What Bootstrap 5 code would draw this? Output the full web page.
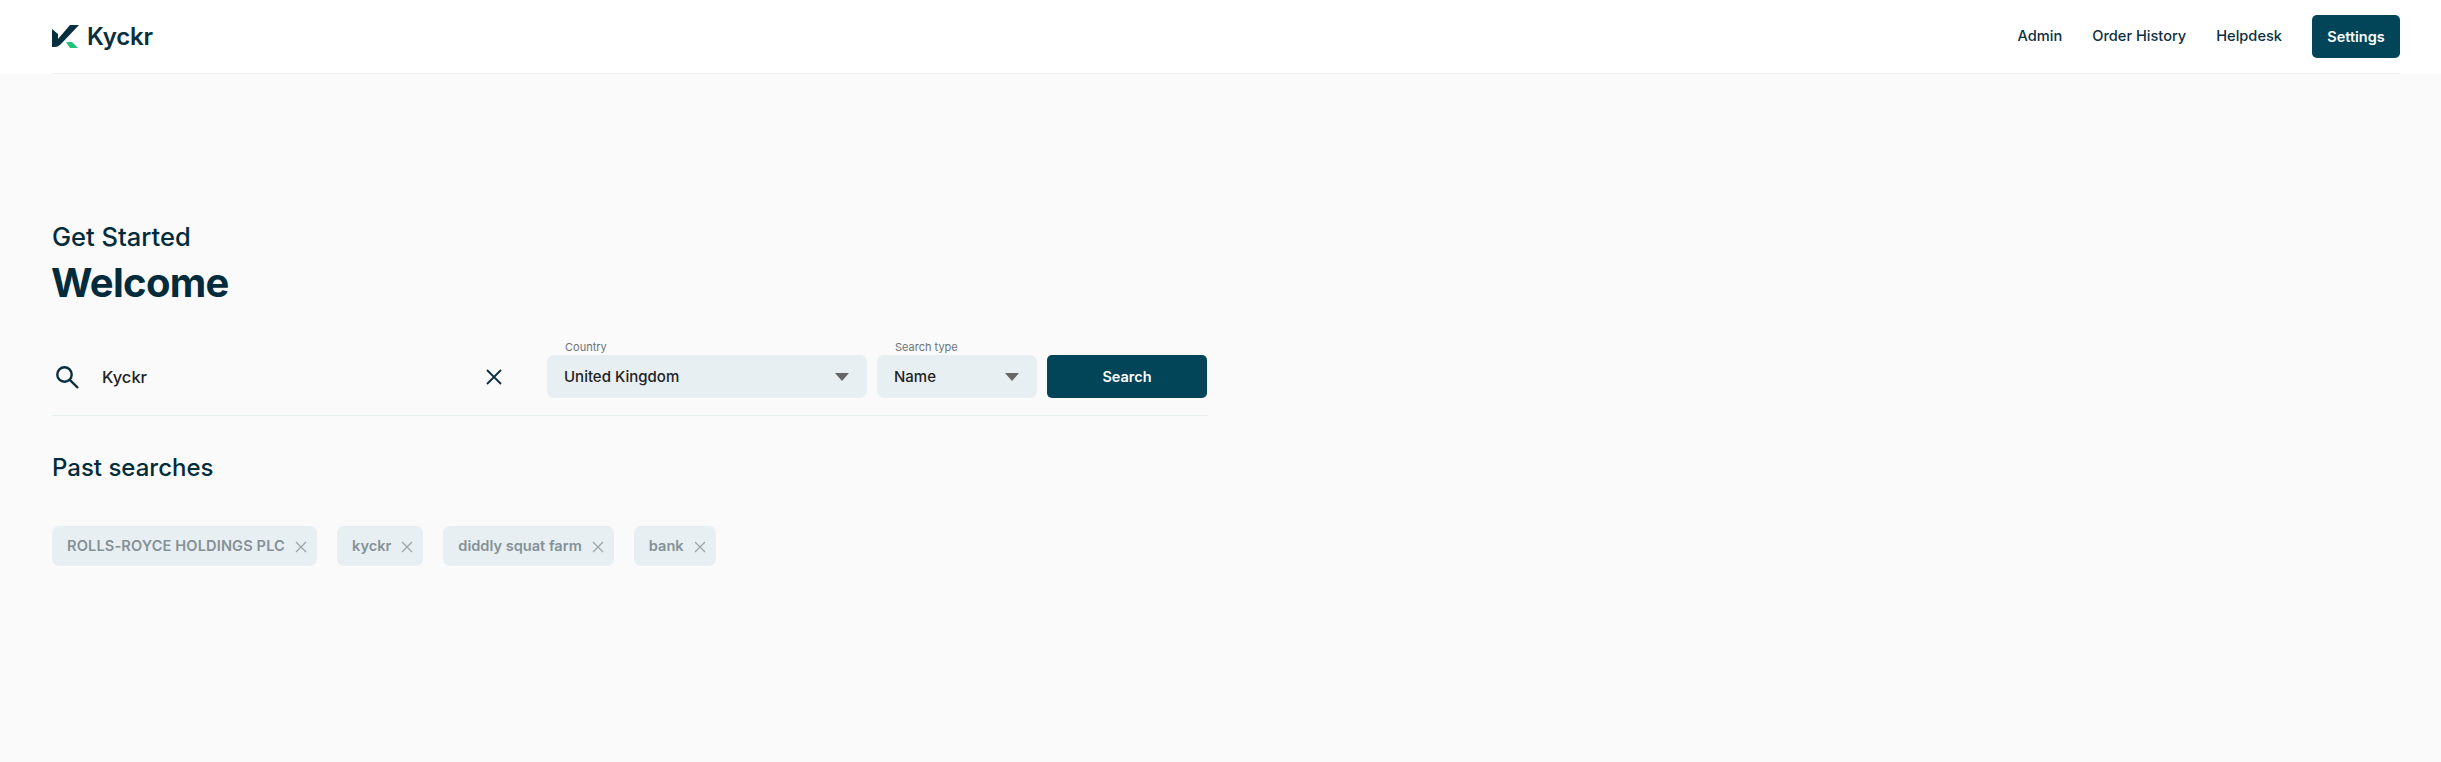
<!DOCTYPE html>
<html lang="en"><head><meta charset="utf-8"><title>Kyckr</title>
<link href="https://cdn.jsdelivr.net/npm/bootstrap@5.3.0/dist/css/bootstrap.min.css" rel="stylesheet">
<style>
html,body{height:100%}
body{background:#fafafa;font-family:Inter,"Noto Sans",sans-serif;color:#022c3c;min-height:762px}
.topbar{background:#fff;padding:0 41px 0 52px;height:74px}
.topbar-in{height:74px;border-bottom:1px solid #efefef}
.brand{font-size:24px;font-weight:600;color:#0a2f3d;letter-spacing:-.2px;gap:8px;text-decoration:none}
.top-link{font-size:14.6px;font-weight:500;color:#0b2f3f;text-decoration:none}
.top-links{gap:30px}
.btn-k{background:#024458;color:#fff;font-weight:600;font-size:14.5px;border:0;border-radius:5px}
.btn-k:hover{background:#024458;color:#fff}
.btn-settings{width:88px;height:43px}
main{padding:148px 0 0 52px;width:1208px}
.eyebrow{font-size:25.5px;line-height:30px;font-weight:500;margin:0 0 6px;color:#022c3c}
.welcome{font-size:40px;line-height:50px;font-weight:700;margin:0 0 0 -1px;letter-spacing:-.7px;color:#022c3c}
.searchrow{margin-top:34px;height:74px;border-bottom:1px solid #e6eef0;gap:10px;padding-bottom:17px}
.q{width:485px;height:43px;padding-left:3px}
.q input{border:0;background:transparent;box-shadow:none!important;font-size:16.5px;font-weight:500;color:#222;padding:1px 0 0;height:43px;margin-left:23px;width:370px}
.q .clear{margin-right:35px}
.field{position:relative}
.field label{position:absolute;left:18px;top:-15px;font-size:11px;line-height:14px;color:#6b7478}
.form-select.k{background-color:#e8eff2;border:0;border-radius:7px;height:43px;font-size:15px;font-weight:500;color:#222;padding:2px 17px 0;background-image:url("data:image/svg+xml,%3Csvg xmlns='http://www.w3.org/2000/svg' viewBox='0 0 14 8'%3E%3Cpath fill='%23666' d='M0 0h14L7 8z'/%3E%3C/svg%3E");background-size:14px 8px;background-position:right 18px center}
.f1{width:320px}.f2{width:160px}
.btn-search{width:160px;height:43px}
.past{font-size:24px;line-height:30px;font-weight:500;margin:37px 0 0;color:#022c3c}
.chips{gap:20px;margin-top:43px}
.chip{background:#e8eff2;border-radius:7px;height:40px;padding:1px 10px 0 15px;font-size:14.6px;font-weight:600;color:#859196;gap:10px}
.chip.caps{letter-spacing:.13px}
.chip svg{width:12px;height:12px;stroke:#9aa5a9;stroke-width:1.3;fill:none;flex:none}
</style></head>
<body>
<nav class="topbar">
 <div class="topbar-in d-flex align-items-center justify-content-between">
  <a class="brand d-flex align-items-center" href="#">
   <svg width="27" height="24" viewBox="0 0 27 24"><path fill="#06303f" d="M0 4l6 5v5L18 0h9L9 19c-2 2-4 3-6 3H0z"/><path fill="#22c178" d="M14 17h6l6 6h-8z"/></svg>
   <span>Kyckr</span></a>
  <div class="d-flex align-items-center top-links">
   <a class="top-link" href="#">Admin</a><a class="top-link" href="#">Order History</a><a class="top-link" href="#">Helpdesk</a>
   <button class="btn btn-k btn-settings p-0">Settings</button>
  </div>
 </div>
</nav>
<main>
 <h2 class="eyebrow">Get Started</h2>
 <h1 class="welcome">Welcome</h1>
 <div class="searchrow d-flex align-items-end">
  <div class="q d-flex align-items-center">
   <svg width="24" height="24" viewBox="0 0 24 24" fill="none" stroke="#0b2f3f" stroke-width="2.4"><circle cx="9.5" cy="9.5" r="7.2"/><path d="M14.8 14.8L23 23"/></svg>
   <input class="form-control" value="Kyckr">
   <svg class="clear ms-auto" width="16" height="16" viewBox="0 0 16 16" fill="none" stroke="#0b2f3f" stroke-width="1.8"><path d="M1 1l14 14M15 1L1 15"/></svg>
  </div>
  <div class="field f1"><label>Country</label><select class="form-select k"><option>United Kingdom</option></select></div>
  <div class="field f2"><label>Search type</label><select class="form-select k"><option>Name</option></select></div>
  <button class="btn btn-k btn-search p-0">Search</button>
 </div>
 <h3 class="past">Past searches</h3>
 <div class="chips d-flex">
  <span class="chip caps d-flex align-items-center">ROLLS-ROYCE HOLDINGS PLC<svg viewBox="0 0 12 12"><path d="M1 1l10 10M11 1L1 11"/></svg></span>
  <span class="chip d-flex align-items-center">kyckr<svg viewBox="0 0 12 12"><path d="M1 1l10 10M11 1L1 11"/></svg></span>
  <span class="chip d-flex align-items-center">diddly squat farm<svg viewBox="0 0 12 12"><path d="M1 1l10 10M11 1L1 11"/></svg></span>
  <span class="chip d-flex align-items-center">bank<svg viewBox="0 0 12 12"><path d="M1 1l10 10M11 1L1 11"/></svg></span>
 </div>
</main>
<script src="https://cdn.jsdelivr.net/npm/bootstrap@5.3.0/dist/js/bootstrap.bundle.min.js"></script>
</body></html>
